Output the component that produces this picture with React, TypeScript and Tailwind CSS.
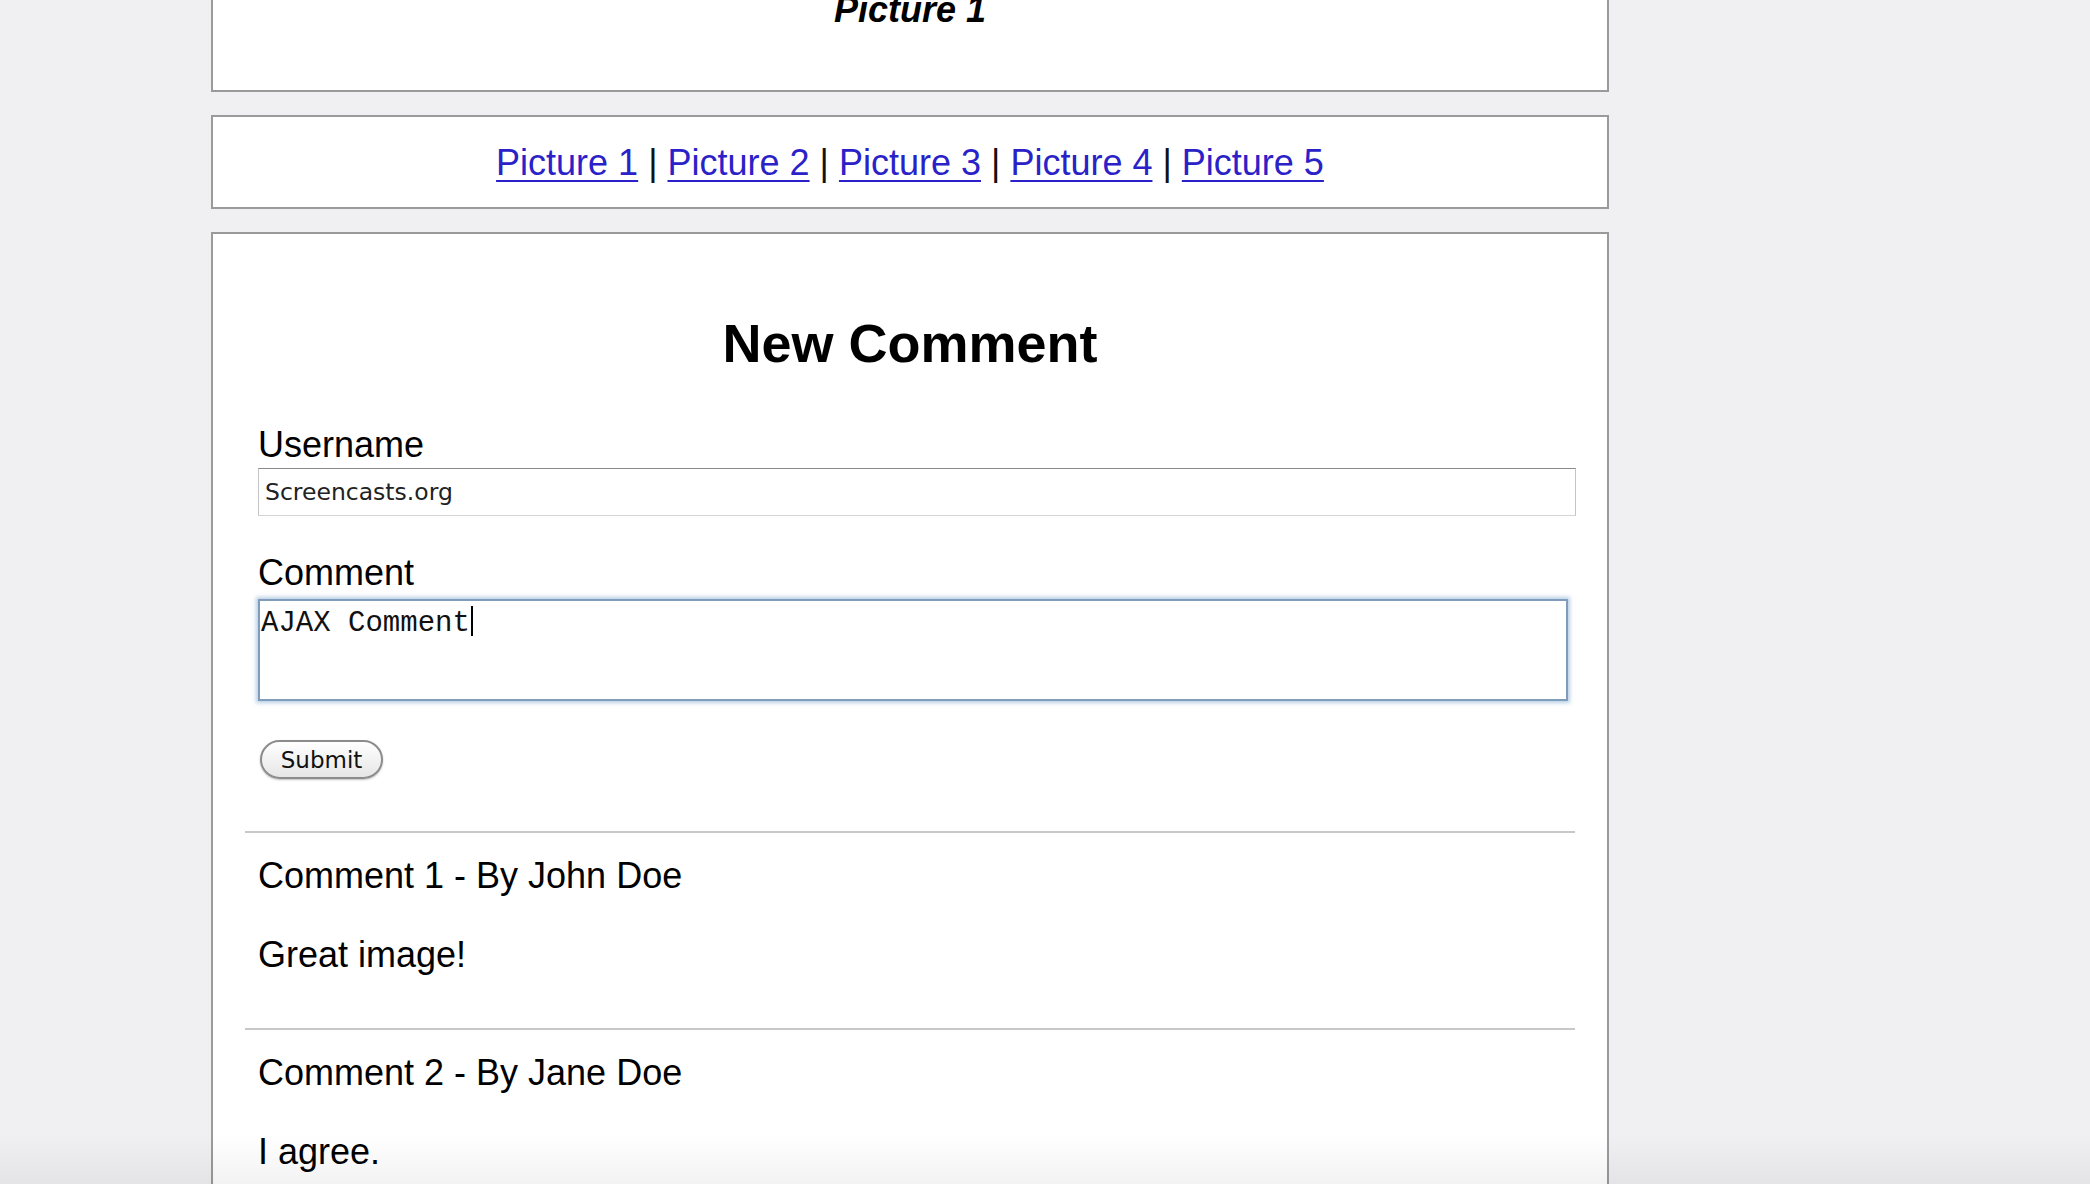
const pictures = ['Picture 1', 'Picture 2', 'Picture 3', 'Picture 4', 'Picture 5'];

const comments = [
  { title: 'Comment 1 - By John Doe', body: 'Great image!' },
  { title: 'Comment 2 - By Jane Doe', body: 'I agree.' },
];

function PicturePanel() {
  return (
    <div className="-mt-[60px] h-[152px] border-2 border-[#9a9a9a] bg-white pt-[47px] text-center">
      <h3 className="font-bold italic">Picture 1</h3>
    </div>
  );
}

function PictureNav() {
  return (
    <div className="mt-[23px] border-2 border-[#9a9a9a] bg-white pt-[25px] pb-[23px] text-center">
      {pictures.map((p, i) => (
        <span key={p}>
          {i > 0 && <span className="text-[#111]"> | </span>}
          <a href="#" className="text-[#2a22c8] underline underline-offset-[5px] decoration-[2px]">
            {p}
          </a>
        </span>
      ))}
    </div>
  );
}

function CommentForm() {
  return (
    <div className="pl-[13px]">
      <label className="mt-[50px] block">Username</label>
      <div className="mt-[2px] flex h-[48px] w-[1318px] items-center border border-t-[#8a8a8a] border-x-[#c4c4c4] border-b-[#d4d4d4] bg-white pl-[6px] font-['DejaVu_Sans',sans-serif] text-[23.5px] text-[#222]">
        Screencasts.org
      </div>

      <label className="mt-[36px] block">Comment</label>
      <div className="mt-[5px] h-[102px] w-[1310px] border-2 border-[#7f9dbb] bg-white pl-[1px] font-['Liberation_Mono',monospace] text-[29px] text-[#111] shadow-[0_0_4px_2px_rgba(126,166,208,0.55)]">
        AJAX Comment
        <span className="ml-[1px] inline-block h-[30px] w-[2px] translate-y-[5px] bg-black" />
      </div>

      <button
        type="button"
        className="mt-[39px] ml-[2px] flex h-[39px] w-[123px] items-center justify-center rounded-full border-2 border-[#8c8c8c] bg-gradient-to-b from-white to-[#e6e6e6] font-['DejaVu_Sans',sans-serif] text-[23px] text-[#111] shadow-[0_1px_2px_rgba(0,0,0,0.25)]"
      >
        Submit
      </button>
    </div>
  );
}

function CommentList() {
  return (
    <div className="mt-[52px]">
      {comments.map((c) => (
        <div key={c.title} className="pb-[52px]">
          <div className="h-[2px] bg-[#c8c8c8]" />
          <div className="pl-[13px]">
            <p className="mt-[22px]">{c.title}</p>
            <p className="mt-[37px]">{c.body}</p>
          </div>
        </div>
      ))}
    </div>
  );
}

export default function App() {
  return (
    <div className="relative h-[1184px] overflow-hidden bg-[#f0f0f2] font-['Liberation_Sans',Arial,sans-serif] text-[36px] leading-[normal] text-black">
      <div className="ml-[211px] w-[1398px]">
        <PicturePanel />
        <PictureNav />
        <div className="mt-[23px] border-2 border-[#9a9a9a] bg-white px-[32px] pt-[78px]">
          <h2 className="text-center text-[54px] font-bold">New Comment</h2>
          <CommentForm />
          <CommentList />
        </div>
      </div>
      <div className="pointer-events-none absolute inset-x-0 bottom-0 h-[50px] bg-gradient-to-b from-transparent to-black/[0.05]" />
    </div>
  );
}
